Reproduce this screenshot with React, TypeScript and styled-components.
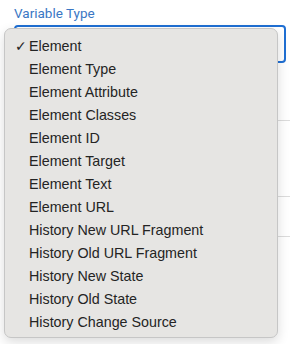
import styled, { createGlobalStyle } from "styled-components";

const GlobalStyle = createGlobalStyle`
  html, body {
    margin: 0;
    padding: 0;
    background: #ffffff;
  }
  body {
    font-family: "Liberation Sans", Arial, sans-serif;
  }
`;

const options = [
  "Element",
  "Element Type",
  "Element Attribute",
  "Element Classes",
  "Element ID",
  "Element Target",
  "Element Text",
  "Element URL",
  "History New URL Fragment",
  "History Old URL Fragment",
  "History New State",
  "History Old State",
  "History Change Source",
];

const Page = styled.div`
  position: relative;
  width: 290px;
  height: 344px;
  overflow: hidden;
  background: #fff;
`;

const Field = styled.div`
  display: flex;
  flex-direction: column;
  padding: 5px 4px 0 14px;
`;

const Label = styled.label`
  font-family: Roboto, "Liberation Sans", sans-serif;
  font-size: 13.5px;
  line-height: 16px;
  color: #3a77c4;
  margin-bottom: 4px;
`;

const SelectBox = styled.div`
  height: 34px;
  border: 2px solid #1f6fd3;
  border-radius: 4px;
  background: #fff;
`;

const Section = styled.div<{ $height: number }>`
  height: ${({ $height }) => $height}px;
  border-bottom: 1px solid #dcdcdc;
  margin-left: 14px;
`;

const Menu = styled.ul`
  position: absolute;
  left: 4px;
  top: 28px;
  width: 272px;
  margin: 0;
  padding: 5px 0 0;
  height: 303px;
  list-style: none;
  background: #e6e5e3;
  border: 1px solid #c6c6c6;
  border-radius: 7px;
  box-shadow: 0 4px 12px rgba(0, 0, 0, 0.14);
`;

const Item = styled.li`
  display: flex;
  align-items: center;
  height: 23px;
  font-size: 14.3px;
  color: #242424;
`;

const Check = styled.span`
  width: 24px;
  padding-left: 10px;
  box-sizing: border-box;
  font-family: "DejaVu Sans", sans-serif;
  font-size: 14px;
  font-weight: bold;
`;

export default function App() {
  return (
    <Page>
      <GlobalStyle />
      <Field>
        <Label>Variable Type</Label>
        <SelectBox />
      </Field>
      <Section $height={57} />
      <Section $height={75} />
      <Section $height={39} />
      <Menu>
        {options.map((o, i) => (
          <Item key={o}>
            <Check>{i === 0 ? "✓" : ""}</Check>
            {o}
          </Item>
        ))}
      </Menu>
    </Page>
  );
}
